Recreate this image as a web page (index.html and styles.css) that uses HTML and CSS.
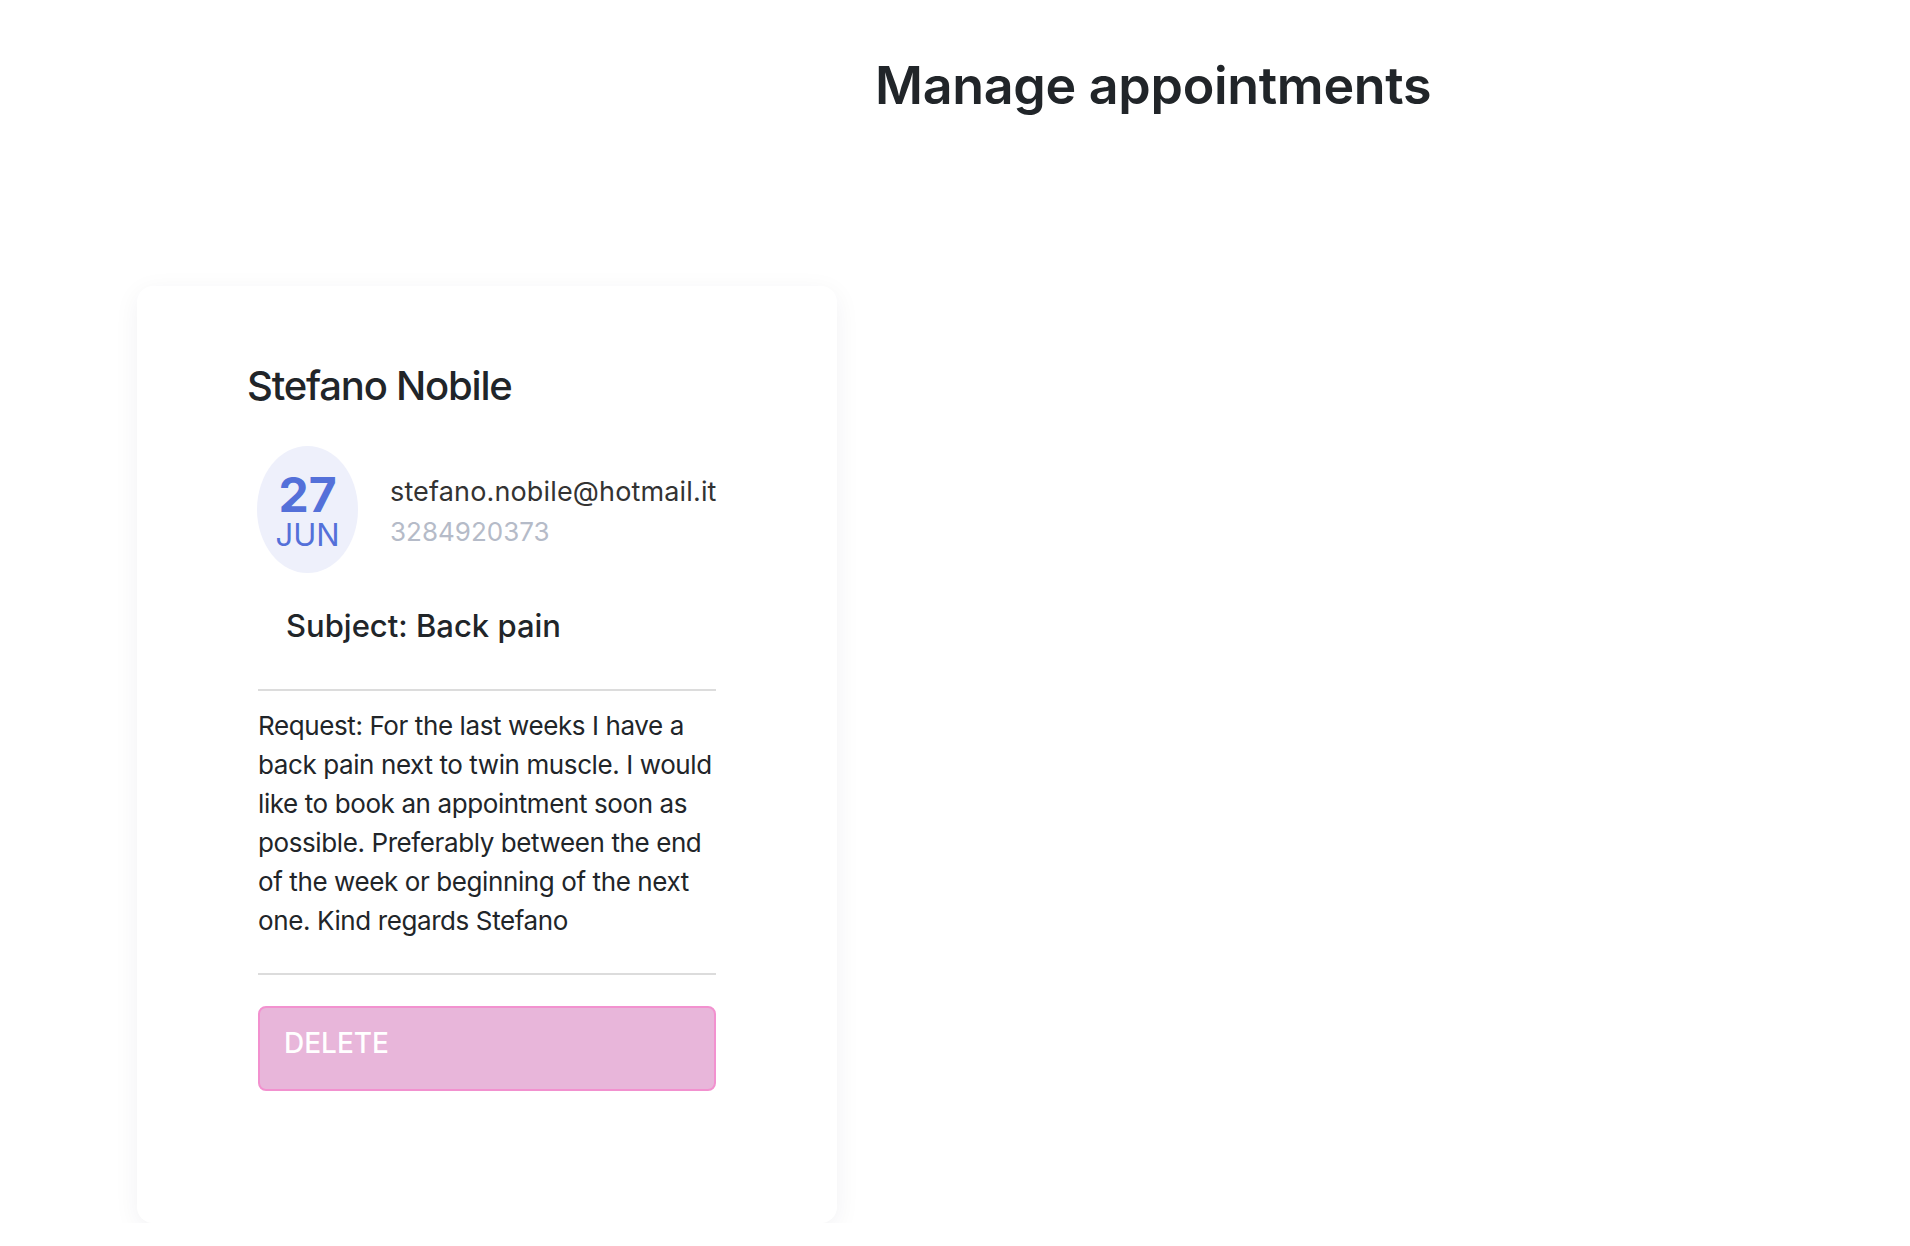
FILE: index.html
```html
<!DOCTYPE html>
<html lang="en">
<head>
<meta charset="utf-8">
<title>Manage appointments</title>
<link rel="stylesheet" href="styles.css">
</head>
<body>
<header class="page-header">
  <h1 class="page-title">Manage appointments</h1>
</header>
<main class="board">
  <article class="appt-card">
    <h2 class="appt-name">Stefano Nobile</h2>
    <div class="appt-meta">
      <div class="date-badge">
        <span class="date-day">27</span>
        <span class="date-month">JUN</span>
      </div>
      <div class="contact">
        <div class="contact-email">stefano.nobile@hotmail.it</div>
        <div class="contact-phone">3284920373</div>
      </div>
    </div>
    <h3 class="appt-subject">Subject: Back pain</h3>
    <hr class="divider">
    <p class="appt-request">Request: For the last weeks I have a back pain next to twin muscle. I would like to book an appointment soon as possible. Preferably between the end of the week or beginning of the next one. Kind regards Stefano</p>
    <hr class="divider divider-bottom">
    <button class="btn-delete" type="button">DELETE</button>
  </article>
</main>
</body>
</html>
```
FILE: styles.css
```css
* { box-sizing: border-box; }

body {
  margin: 0;
  background: #ffffff;
  font-family: Inter, "Noto Sans", "Liberation Sans", sans-serif;
  color: #212529;
}

.page-header {
  padding: 55px 0 0 875px;
}

.page-title {
  margin: 0;
  font-size: 52px;
  line-height: 62px;
  font-weight: 600;
  color: #212529;
  letter-spacing: -0.3px;
}

.board {
  padding: 169px 0 0 137px;
}

.appt-card {
  width: 700px;
  height: 937px;
  background: #ffffff;
  border-radius: 16px;
  box-shadow: 0 6px 26px rgba(30, 30, 60, 0.06);
  padding: 76px 121px 0 121px;
  display: flex;
  flex-direction: column;
}

.appt-name {
  margin: 0 0 0 -11px;
  font-size: 40px;
  line-height: 48px;
  font-weight: 500;
  letter-spacing: -1.2px;
  color: #212529;
}

.appt-meta {
  margin-top: 36px;
  display: flex;
  align-items: center;
  gap: 32px;
}

.date-badge {
  flex: none;
  width: 101px;
  height: 127px;
  border-radius: 50%;
  background: #eef0fb;
  margin-left: -1px;
  display: flex;
  flex-direction: column;
  align-items: center;
  justify-content: center;
  color: #5470d9;
  padding-top: 3px;
}

.date-day {
  font-size: 48px;
  line-height: 48px;
  font-weight: 700;
}

.date-month {
  font-size: 31px;
  line-height: 32px;
  font-weight: 400;
}

.contact {
  display: flex;
  flex-direction: column;
  margin-top: 3px;
}

.contact-email {
  font-size: 27px;
  line-height: 40px;
  letter-spacing: 0.15px;
  color: #333333;
}

.contact-phone {
  font-size: 26px;
  line-height: 39px;
  color: #b5bbc8;
}

.appt-subject {
  margin: 35px 0 0 28px;
  font-size: 31px;
  line-height: 36px;
  font-weight: 500;
  color: #212529;
}

.divider {
  margin: 45px 0 0 0;
  border: 0;
  height: 2px;
  background: #dcdcdc;
}

.divider-bottom {
  margin-top: 33px;
}

.appt-request {
  margin: 15px 0 0 0;
  font-size: 26px;
  line-height: 39px;
  letter-spacing: -0.4px;
  color: #212529;
}

.btn-delete {
  margin-top: 31px;
  width: 100%;
  height: 85px;
  padding: 18px 24px 29px;
  text-align: left;
  font-family: inherit;
  font-size: 28px;
  line-height: 34px;
  font-weight: 500;
  color: #ffffff;
  background: #e8b6da;
  border: 2px solid #f291cf;
  border-radius: 8px;
}
```
